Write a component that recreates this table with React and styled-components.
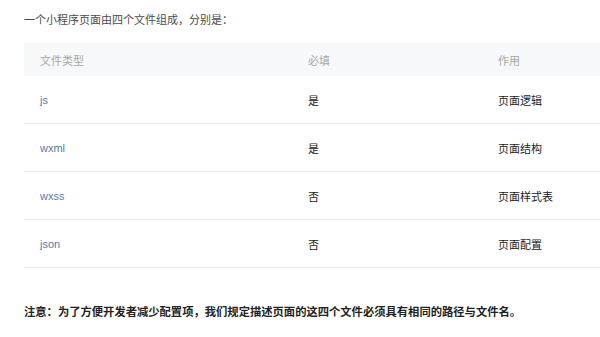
import React from "react";
import styled, { createGlobalStyle } from "styled-components";

const Global = createGlobalStyle`
  html, body { margin: 0; padding: 0; background: #fff; }
  body {
    font-family: "Liberation Sans", "Noto Sans CJK SC", sans-serif;
    -webkit-font-smoothing: antialiased;
  }
`;

const Page = styled.div`
  padding: 9px 0 0 24px;
  width: 576px;
`;

const Intro = styled.p`
  margin: 0;
  font-size: 11px;
  line-height: 22px;
  color: #4a4a4a;
`;

const Table = styled.div`
  margin-top: 12px;
  display: grid;
  grid-template-columns: 268px 190px 1fr;
`;

const HeadCell = styled.div`
  background: #f7f8f9;
  height: 33px;
  display: flex;
  align-items: center;
  padding-left: 16px;
  font-size: 11px;
  color: #a8a8a8;
`;

const Cell = styled.div`
  height: 47px;
  border-bottom: 1px solid #ededed;
  display: flex;
  align-items: center;
  padding-left: 16px;
  font-size: 11px;
  color: ${(p) => (p.$link ? "#5a7aab" : "#222")};
`;

const Note = styled.p`
  margin: 33px 0 0;
  font-size: 11.3px;
  line-height: 22px;
  font-weight: bold;
  color: #222;
`;

const rows = [
  ["js", "是", "页面逻辑"],
  ["wxml", "是", "页面结构"],
  ["wxss", "否", "页面样式表"],
  ["json", "否", "页面配置"],
];

export default function App() {
  return (
    <>
      <Global />
      <Page>
        <Intro>一个小程序页面由四个文件组成，分别是：</Intro>
        <Table>
          <HeadCell>文件类型</HeadCell>
          <HeadCell>必填</HeadCell>
          <HeadCell>作用</HeadCell>
          {rows.map(([a, b, c]) => (
            <React.Fragment key={a}>
              <Cell $link>{a}</Cell>
              <Cell>{b}</Cell>
              <Cell>{c}</Cell>
            </React.Fragment>
          ))}
        </Table>
        <Note>注意：为了方便开发者减少配置项，我们规定描述页面的这四个文件必须具有相同的路径与文件名。</Note>
      </Page>
    </>
  );
}
